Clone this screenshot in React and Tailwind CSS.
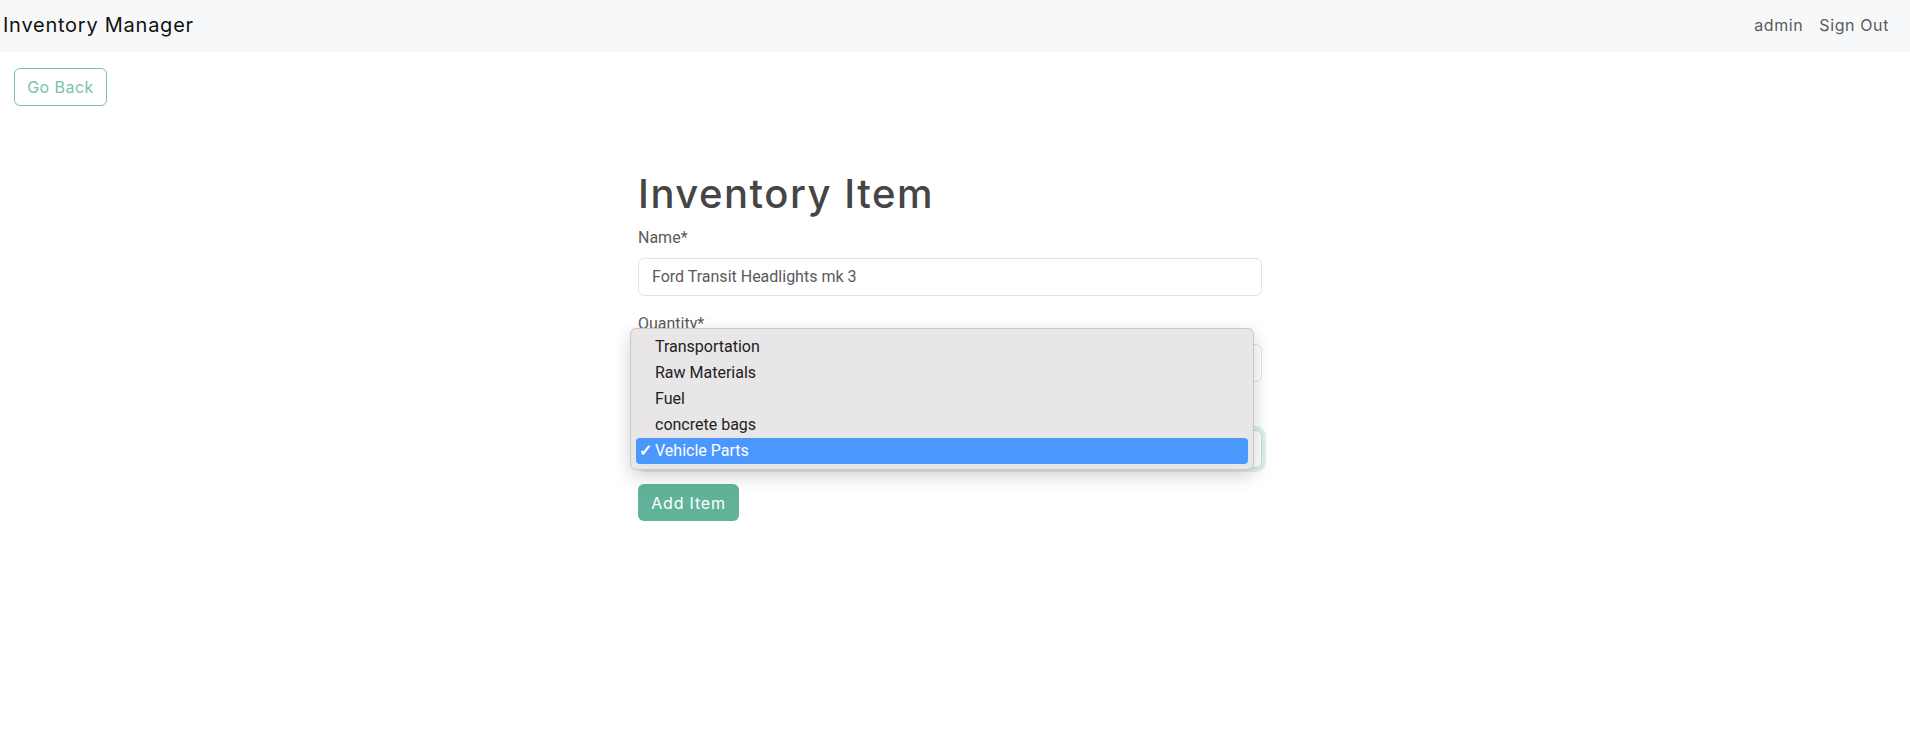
import React from "react";

function Field({ label, children }) {
  return (
    <div className="mb-4">
      <label className="block text-[16px] leading-6 mb-2 text-[#5a5a5a] font-['Roboto',sans-serif]">{label}</label>
      {children}
    </div>
  );
}

export default function App() {
  const options = ["Transportation", "Raw Materials", "Fuel", "concrete bags", "Vehicle Parts"];
  return (
    <div className="min-h-[745px] bg-white font-['Inter','Open_Sans',sans-serif]">
      <nav className="h-[52px] bg-[#f7f8fa] flex items-center justify-between pl-[3px] pr-[21px] pb-[2px]">
        <span className="text-[20px] text-[#111111] tracking-[0.75px]">Inventory Manager</span>
        <div className="flex items-center gap-[16px] text-[16px] text-[#5b5b5b] tracking-[0.6px]">
          <span>admin</span>
          <span>Sign Out</span>
        </div>
      </nav>

      <div className="pl-[14px] pt-[16px]">
        <button className="h-[38px] w-[93px] rounded-[6px] border border-[#78c2ad] text-[#78c2ad] text-[16px] tracking-[0.45px]">
          Go Back
        </button>
      </div>

      <div className="flex justify-center pr-[10px] pt-[64px]">
        <div className="w-[624px] relative">
          <h1 className="text-[40px] leading-[48px] font-medium text-[#454545] mb-[8px] tracking-[1.5px]">Inventory Item</h1>

          <Field label="Name*">
            <div className="h-[38px] rounded-[6px] border border-[#e2e2e2] flex items-center pl-[13px] text-[16px] text-[#5a5a5a] font-['Roboto',sans-serif]">
              Ford Transit Headlights mk 3
            </div>
          </Field>

          <Field label="Quantity*">
            <div className="h-[38px] rounded-[6px] border border-[#e2e2e2]" />
          </Field>

          <Field label="Category*">
            <div className="h-[38px] rounded-[6px] border border-[#bce1d6] shadow-[0_0_0_4px_rgba(120,194,173,0.25)]" />
          </Field>

          <button className="h-[37px] w-[101px] rounded-[6px] bg-[#60b399] text-white text-[16px] tracking-[0.8px]">
            Add Item
          </button>

          <div className="absolute left-[-8px] top-[158px] w-[624px] rounded-[6px] border border-[#c9c7c8] bg-[#e8e6e7] shadow-[0_6px_18px_rgba(0,0,0,0.18)] px-[5px] py-[5px] font-['Roboto',sans-serif]">
            {options.map((o, i) => {
              const sel = i === options.length - 1;
              return (
                <div
                  key={o}
                  className={
                    "h-[26px] flex items-center rounded-[4px] text-[16px] " +
                    (sel ? "bg-[#4a98fe] text-white" : "text-[#222222]")
                  }
                >
                  <span className="w-[19px] pl-[3px] text-[16px] font-bold">{sel ? "✓" : ""}</span>
                  <span>{o}</span>
                </div>
              );
            })}
          </div>
        </div>
      </div>
    </div>
  );
}
